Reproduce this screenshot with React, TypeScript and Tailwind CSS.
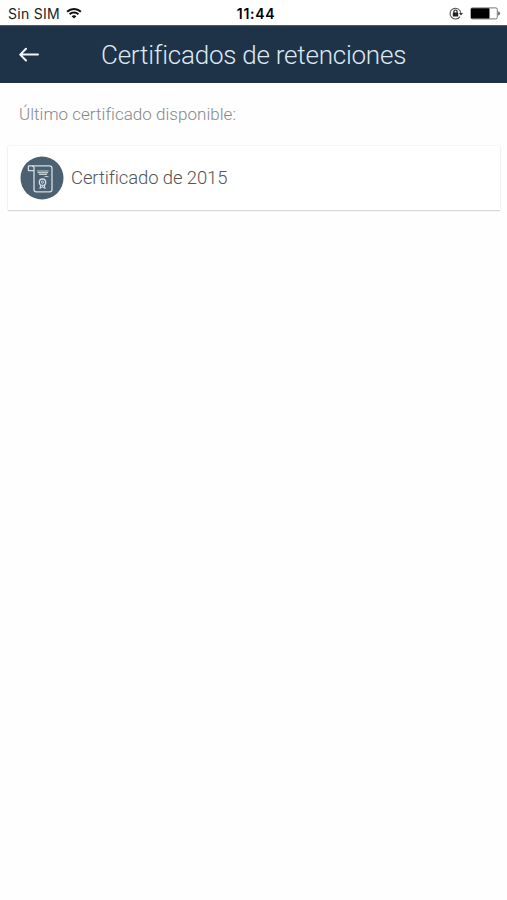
function WifiIcon() {
    return (
        <svg width="16" height="12" viewBox="0 0 16 12" fill="none" stroke="#111" strokeWidth="2">
            <path d="M1.1 4.7C5 1 11 1 14.9 4.7" />
            <path d="M3.6 7.3C6 5 10 5 12.4 7.3" />
            <path d="M8 11.6L5.6 9.2C7 7.9 9 7.9 10.4 9.2Z" fill="#111" stroke="none" />
        </svg>
    )
}

function RotationLockIcon() {
    return (
        <svg width="15" height="13" viewBox="0 0 15 13" fill="none" stroke="#555">
            <path d="M11 9.6A5.4 5.4 0 1 1 11.8 5.8" strokeWidth="1.1" />
            <path d="M10 6H14L12 8.6Z" fill="#333" stroke="none" />
            <rect x="3.8" y="5.4" width="5.4" height="4.2" rx="0.5" fill="#222" stroke="none" />
            <path d="M4.9 6V4.6A1.6 1.6 0 0 1 8.1 4.6V6" stroke="#222" strokeWidth="1.2" />
        </svg>
    )
}

function BatteryIcon() {
    return (
        <svg width="31" height="13" viewBox="0 0 31 13" fill="none">
            <rect x="0.9" y="0.9" width="26.4" height="11" rx="1.5" stroke="#555" strokeWidth="0.8" />
            <rect x="1" y="1.2" width="18.5" height="10.4" rx="0.8" fill="#000" />
            <path d="M28.4 4.5C30.2 5 30.2 8 28.4 8.5Z" fill="#333" />
        </svg>
    )
}

function CertificateIcon() {
    return (
        <svg width="44" height="44" viewBox="0 0 44 44" fill="none" stroke="#d3dde2" strokeWidth="1.3" strokeLinejoin="round">
            <circle cx="22" cy="22" r="21.5" fill="#4b6070" stroke="none" />
            {/* parchment with its rolled corner */}
            <path d="M9 9.8H29.5Q32 9.8 32 12.3V33.5Q32 35.8 29.7 35.8H16.3Q14 35.8 14 33.5V14.6" />
            <path d="M9 9.8Q8.4 9.8 8.4 10.6V14.6H14V12Q14 9.8 11.8 9.8" />
            <path d="M17 15H28.7M17.6 16.7H28M19 18.4H27" strokeWidth="1.2" opacity="0.85" />
            <path d="M24.5 20.6H28.5" strokeWidth="0.9" />
            {/* seal */}
            <circle cx="22.5" cy="26.2" r="3.2" />
            <circle cx="22.5" cy="26.2" r="1.1" strokeWidth="1" />
            <path d="M20.8 29L20 32.4L22.5 30.8L25 32.4L24.2 29" strokeWidth="1.1" />
        </svg>
    )
}

function StatusBar() {
    return (
        <div className="grid h-[25px] grid-cols-3 items-center bg-white pl-2 pr-[6px] pt-[2px] text-black">
            <div className="flex items-center gap-[7px]">
                <span className="whitespace-nowrap font-['Inter',sans-serif] text-[14px] leading-none tracking-[0.3px] text-[#222]">Sin SIM</span>
                <div className="-ml-px pb-[2px]">
                    <WifiIcon />
                </div>
            </div>
            <span className="pl-[3px] text-center font-['Inter',sans-serif] text-[14px] font-semibold leading-none tracking-[0.7px]">11:44</span>
            <div className="flex items-center justify-end gap-[6px] pb-[1px]">
                <RotationLockIcon />
                <BatteryIcon />
            </div>
        </div>
    )
}

export default function App() {
    return (
        <div className="h-[900px] w-[507px] overflow-hidden bg-[#fefefe] font-['Roboto',sans-serif]">
            <StatusBar />

            <header className="flex h-[58px] items-center border-t border-[#4a5d6d] bg-[#1e3248] pl-[19px]">
                <button aria-label="Volver" className="w-[82px]">
                    <svg width="21" height="16" viewBox="0 0 21 16" fill="none" stroke="#f3f6f8" strokeWidth="2" strokeLinecap="round" strokeLinejoin="round">
                        <path d="M19 7.6H1.5M7 1.7L1.2 7.6L7 13.5" />
                    </svg>
                </button>
                <h1 className="whitespace-nowrap text-[26px] font-light leading-none tracking-[-0.23px] text-[#dce8f1]">Certificados de retenciones</h1>
            </header>

            <main className="px-2 pt-5">
                <p className="ml-[11px] text-[17px] font-light leading-[22px] tracking-[0.03px] text-[#888]">Último certificado disponible:</p>
                <div className="mt-[21px] flex h-16 w-[492px] items-center gap-[7px] bg-white pl-3 shadow-[0_0_2px_rgba(0,0,0,0.1),0_1px_1px_rgba(0,0,0,0.12)]">
                    <CertificateIcon />
                    <span className="pt-[1px] text-[18.5px] font-light leading-none tracking-[-0.12px] text-[#555]">Certificado de 2015</span>
                </div>
            </main>
        </div>
    )
}
